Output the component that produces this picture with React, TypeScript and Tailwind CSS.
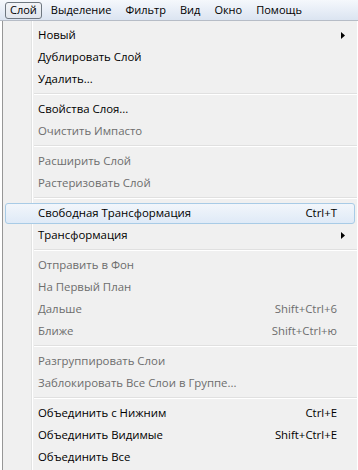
import React from 'react';

type Item = { label: string; shortcut?: string; disabled?: boolean; submenu?: boolean; active?: boolean } | 'sep';

const items: Item[] = [
  { label: 'Новый', submenu: true },
  { label: 'Дублировать Слой' },
  { label: 'Удалить...' },
  'sep',
  { label: 'Свойства Слоя...' },
  { label: 'Очистить Импасто', disabled: true },
  'sep',
  { label: 'Расширить Слой', disabled: true },
  { label: 'Растеризовать Слой', disabled: true },
  'sep',
  { label: 'Свободная Трансформация', shortcut: 'Ctrl+T', active: true },
  { label: 'Трансформация', submenu: true },
  'sep',
  { label: 'Отправить в Фон', disabled: true },
  { label: 'На Первый План', disabled: true },
  { label: 'Дальше', shortcut: 'Shift+Ctrl+6', disabled: true },
  { label: 'Ближе', shortcut: 'Shift+Ctrl+ю', disabled: true },
  'sep',
  { label: 'Разгруппировать Слои', disabled: true },
  { label: 'Заблокировать Все Слои в Группе...', disabled: true },
  'sep',
  { label: 'Объединить с Нижним', shortcut: 'Ctrl+E' },
  { label: 'Объединить Видимые', shortcut: 'Shift+Ctrl+E' },
  { label: 'Объединить Все' },
];

const menus = ['Слой', 'Выделение', 'Фильтр', 'Вид', 'Окно', 'Помощь'];

export default function App() {
  return (
    <div
      className="w-[358px] h-[470px] overflow-hidden bg-white text-[11.4px] text-black"
      style={{ fontFamily: '"Open Sans", "Noto Sans", sans-serif' }}
    >
      {/* menu bar */}
      <div className="h-[21px] flex items-center pl-[5px] text-[11px] bg-gradient-to-b from-[#f5f8fc] to-[#dbe4f1] border-b border-[#b6bcc6]">
        {menus.map((m, i) => (
          <div
            key={m}
            className={
              i === 0
                ? 'h-[17px] px-[4px] mr-[2px] flex items-center rounded-[3px] border border-[#6e7780] bg-gradient-to-b from-[#f2f4f7] to-[#e1e6ed]'
                : 'h-[17px] px-[7px] flex items-center'
            }
          >
            {m}
          </div>
        ))}
      </div>

      {/* dropdown */}
      <div className="relative ml-[2px] w-[355px] bg-[#f0f0f0] border-l border-[#979797] pt-[3px] pb-[3px]">
        <div className="absolute left-[28px] top-0 bottom-0 w-[2px] border-l border-[#e2e3e3] bg-[#f0f0f0]">
          <div className="ml-0 w-px h-full bg-white" />
        </div>
        {items.map((it, i) =>
          it === 'sep' ? (
            <div key={i} className="h-[8px] flex items-center pl-[31px] relative">
              <div className="w-full">
                <div className="h-px bg-[#e0e0e0]" />
                <div className="h-px bg-white" />
              </div>
            </div>
          ) : (
            <div key={i} className="h-[22px] relative flex items-center px-[2px]">
              <div
                className={
                  'flex-1 h-[21px] flex items-center pl-[32px] pr-[16px] rounded-[3px] border ' +
                  (it.active
                    ? 'border-[#a8cbe6] bg-gradient-to-b from-[#f2f6fb] to-[#dfeaf7]'
                    : 'border-transparent')
                }
              >
                <span className={'flex-1 ' + (it.disabled ? 'text-[#6d6d6d]' : 'text-black')}>{it.label}</span>
                {it.shortcut && (
                  <span className={'mr-[1px] ' + (it.disabled ? 'text-[#6d6d6d]' : 'text-black')}>{it.shortcut}</span>
                )}
                {it.submenu && (
                  <svg width="4" height="7" viewBox="0 0 4 7" className="absolute right-[12px]">
                    <path d="M0 0 L4 3.5 L0 7 Z" fill="#000" />
                  </svg>
                )}
              </div>
            </div>
          )
        )}
      </div>
    </div>
  );
}
